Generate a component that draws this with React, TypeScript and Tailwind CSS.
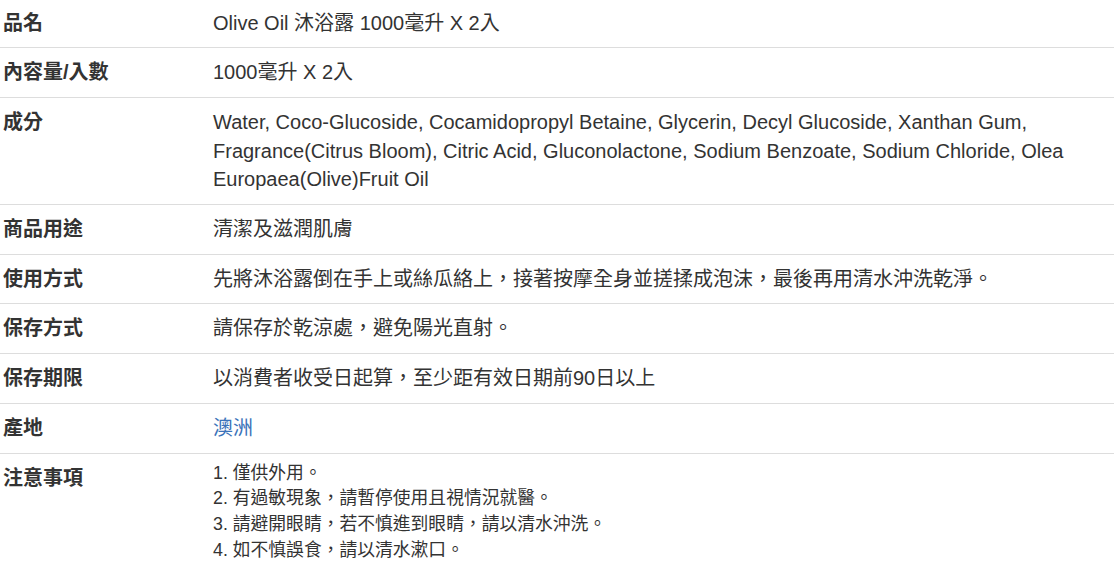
import React from 'react';

type Spec = {
  label: string;
  value: React.ReactNode;
};

const specs: Spec[] = [
  { label: '品名', value: 'Olive Oil 沐浴露 1000毫升 X 2入' },
  { label: '內容量/入數', value: '1000毫升 X 2入' },
  {
    label: '成分',
    value:
      'Water, Coco-Glucoside, Cocamidopropyl Betaine, Glycerin, Decyl Glucoside, Xanthan Gum, Fragrance(Citrus Bloom), Citric Acid, Gluconolactone, Sodium Benzoate, Sodium Chloride, Olea Europaea(Olive)Fruit Oil',
  },
  { label: '商品用途', value: '清潔及滋潤肌膚' },
  {
    label: '使用方式',
    value: '先將沐浴露倒在手上或絲瓜絡上，接著按摩全身並搓揉成泡沫，最後再用清水沖洗乾淨。',
  },
  { label: '保存方式', value: '請保存於乾涼處，避免陽光直射。' },
  { label: '保存期限', value: '以消費者收受日起算，至少距有效日期前90日以上' },
  {
    label: '產地',
    value: <a className="text-[#3b73b9]">澳洲</a>,
  },
  {
    label: '注意事項',
    value: (
      <div className="-mt-[3px] text-[17.8px] leading-[25.7px]">
        <div>1. 僅供外用。</div>
        <div>2. 有過敏現象，請暫停使用且視情況就醫。</div>
        <div>3. 請避開眼睛，若不慎進到眼睛，請以清水沖洗。</div>
        <div>4. 如不慎誤食，請以清水漱口。</div>
      </div>
    ),
  },
];

const App = () => {
  return (
    <div
      className="-mt-[1.5px] w-[1114px] bg-white text-[#333]"
      style={{
        fontFamily:
          '"Liberation Sans", Arial, "Noto Sans CJK TC", sans-serif',
      }}
    >
      <table className="w-full border-collapse text-[20px] leading-[28.7px]">
        <tbody>
          {specs.map((spec) => (
            <tr key={spec.label} className="border-b border-[#ddd] last:border-b-0">
              <th className="w-[210px] px-[3px] py-[10px] text-left align-top font-bold">
                {spec.label}
              </th>
              <td className="px-[3px] py-[10px] align-top">{spec.value}</td>
            </tr>
          ))}
        </tbody>
      </table>
    </div>
  );
};

export default App;
